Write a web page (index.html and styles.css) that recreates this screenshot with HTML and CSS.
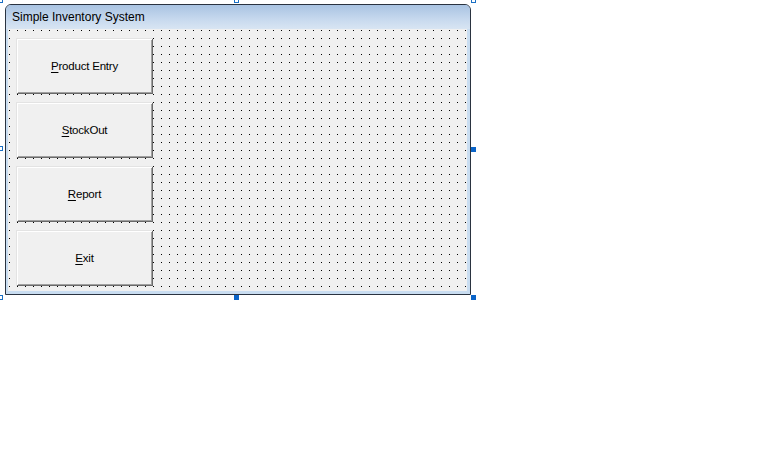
FILE: index.html
```html
<!DOCTYPE html>
<html>
<head>
<meta charset="utf-8">
<link rel="stylesheet" href="styles.css">
</head>
<body>
<div class="stage">
  <div class="window">
    <div class="titlebar"><span class="title">Simple Inventory System</span></div>
    <div class="client">
      <button class="btn"><u>P</u>roduct Entry</button>
      <button class="btn"><u>S</u>tockOut</button>
      <button class="btn"><u>R</u>eport</button>
      <button class="btn"><u>E</u>xit</button>
    </div>
  </div>
  <span class="handle hollow h-tl"></span>
  <span class="handle hollow h-tm"></span>
  <span class="handle hollow h-tr"></span>
  <span class="handle hollow h-ml"></span>
  <span class="handle filled h-mr"></span>
  <span class="handle hollow h-bl"></span>
  <span class="handle filled h-bm"></span>
  <span class="handle filled h-br"></span>
</div>
</body>
</html>
```
FILE: styles.css
```css
html, body {
  margin: 0;
  padding: 0;
  background: #ffffff;
}
.stage {
  position: relative;
  width: 766px;
  height: 457px;
  padding: 4px 0 0 5px;
  box-sizing: border-box;
}
.window {
  width: 466px;
  height: 291px;
  box-sizing: border-box;
  border: 1px solid #2a3340;
  border-radius: 6px 6px 0 0;
  background: #c9ddf1;
  display: flex;
  flex-direction: column;
  overflow: hidden;
}
.titlebar {
  height: 24px;
  flex: none;
  background: linear-gradient(#a9c3e2, #c7d9ee 60%, #d8e5f3);
  display: flex;
  align-items: center;
  padding-left: 6px;
}
.title {
  font-family: "Liberation Sans", Arial, sans-serif;
  font-size: 12px;
  color: #000;
  position: relative;
  top: 0px;
}
.client {
  flex: 1;
  margin: 0 3px 3px 2px;
  background-color: #f0f0f0;
  background-image: conic-gradient(at 1px 1px, transparent 75%, #000 0);
  background-size: 8px 8px;
  background-position: 1px 1px;
  padding: 9px 0 0 8px;
  display: flex;
  flex-direction: column;
  gap: 8px;
}
.btn {
  width: 137px;
  height: 56px;
  flex: none;
  margin: 0;
  padding: 0;
  border: none;
  background: #f0f0f0;
  box-shadow: inset 1px 1px 0 #e3e3e3, inset -1px -1px 0 #696969, inset 2px 2px 0 #ffffff, inset -2px -2px 0 #a0a0a0;
  font-family: "Liberation Sans", Arial, sans-serif;
  font-size: 11.5px;
  letter-spacing: -0.2px;
  color: #000;
}
.btn u {
  text-decoration: underline;
  text-underline-offset: 2px;
}
.handle {
  position: absolute;
  width: 5px;
  height: 5px;
  box-sizing: border-box;
}
.hollow {
  border: 1px solid #1a6fc4;
  background: #fff;
}
.filled {
  background: #0a64c8;
}
.h-tl { left: -2px; top: -2px; }
.h-tm { left: 234px; top: -2px; }
.h-tr { left: 471px; top: -2px; }
.h-ml { left: -2px; top: 146px; }
.h-mr { left: 471px; top: 147px; }
.h-bl { left: -2px; top: 295px; }
.h-bm { left: 234px; top: 295px; }
.h-br { left: 471px; top: 295px; }
```
